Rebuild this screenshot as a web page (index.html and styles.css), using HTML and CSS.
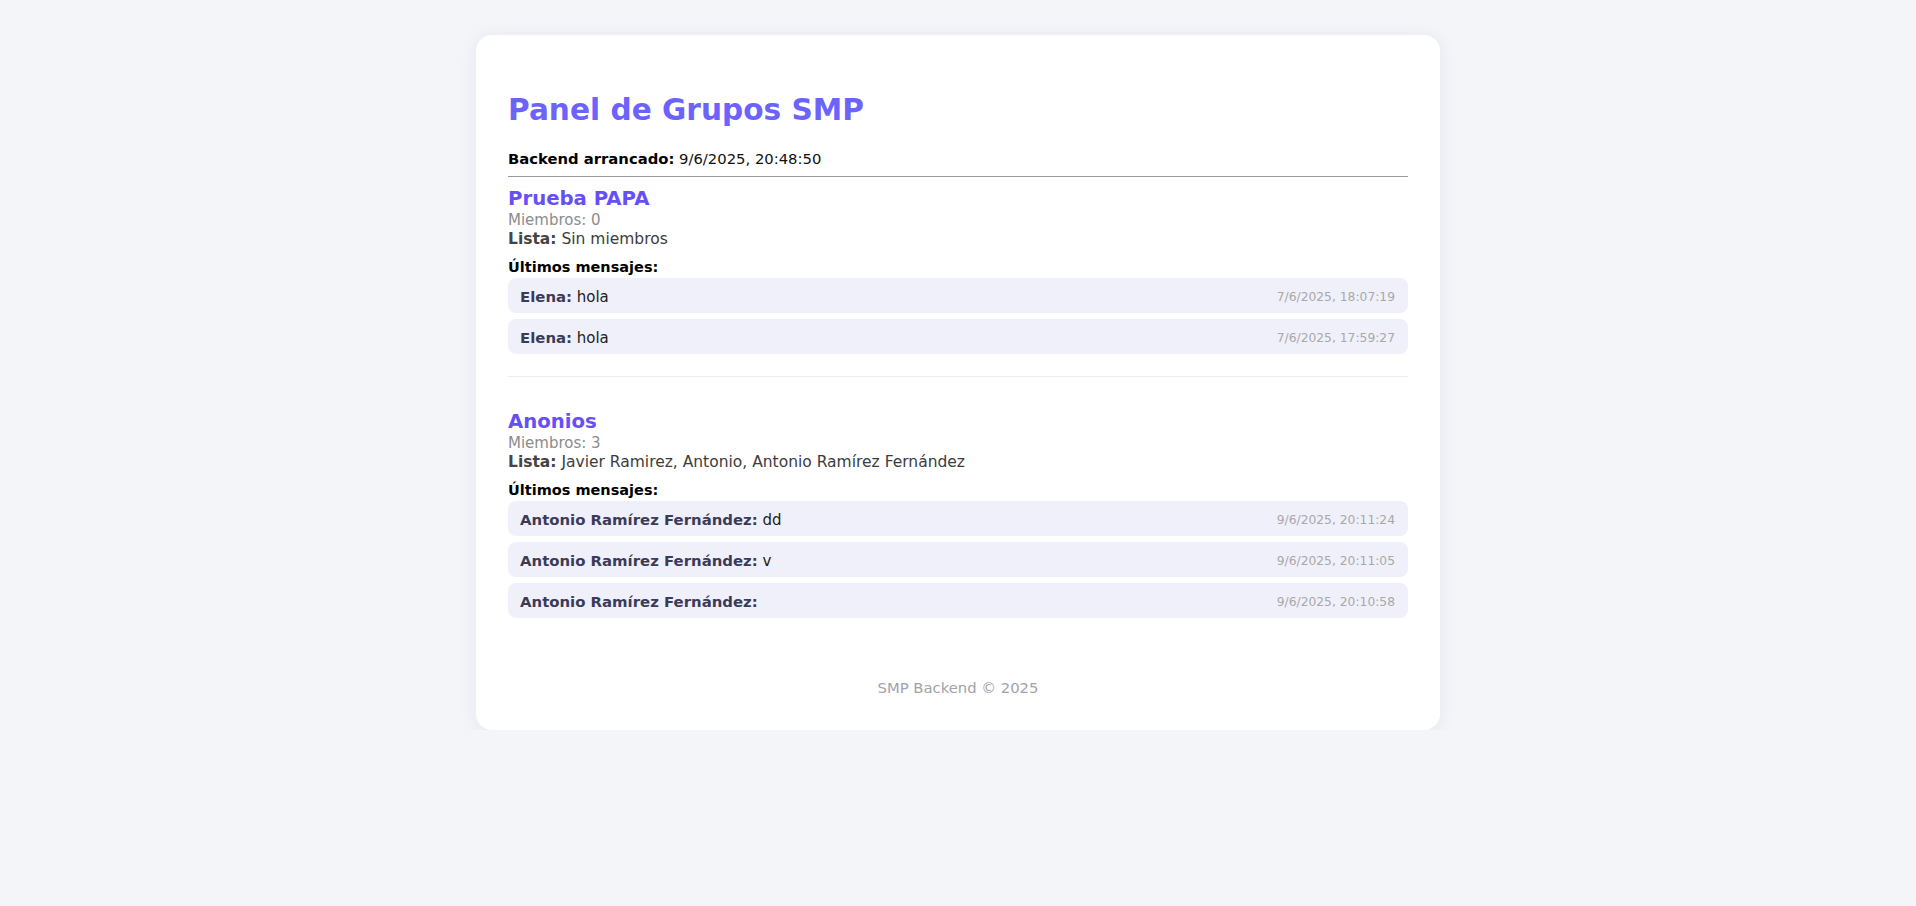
FILE: index.html
```html
<!DOCTYPE html>
<html lang="es">
<head>
<meta charset="utf-8">
<title>Panel de Grupos SMP</title>
<link rel="stylesheet" href="styles.css">
</head>
<body>
<main class="card">
  <h1 class="title">Panel de Grupos SMP</h1>
  <p class="started"><b>Backend arrancado:</b> 9/6/2025, 20:48:50</p>
  <hr class="rule">

  <section class="group">
    <h2 class="group-name">Prueba PAPA</h2>
    <div class="members">Miembros: 0</div>
    <div class="list"><b>Lista:</b> Sin miembros</div>
    <div class="msgs-title">Últimos mensajes:</div>
    <div class="msgs">
      <div class="msg"><span class="msg-text"><b>Elena:</b> hola</span><span class="msg-time">7/6/2025, 18:07:19</span></div>
      <div class="msg"><span class="msg-text"><b>Elena:</b> hola</span><span class="msg-time">7/6/2025, 17:59:27</span></div>
    </div>
  </section>

  <section class="group">
    <h2 class="group-name">Anonios</h2>
    <div class="members">Miembros: 3</div>
    <div class="list"><b>Lista:</b> Javier Ramirez, Antonio, Antonio Ramírez Fernández</div>
    <div class="msgs-title">Últimos mensajes:</div>
    <div class="msgs">
      <div class="msg"><span class="msg-text"><b>Antonio Ramírez Fernández:</b> dd</span><span class="msg-time">9/6/2025, 20:11:24</span></div>
      <div class="msg"><span class="msg-text"><b>Antonio Ramírez Fernández:</b> v</span><span class="msg-time">9/6/2025, 20:11:05</span></div>
      <div class="msg"><span class="msg-text"><b>Antonio Ramírez Fernández:</b> </span><span class="msg-time">9/6/2025, 20:10:58</span></div>
    </div>
  </section>

  <footer class="footer">SMP Backend © 2025</footer>
</main>
</body>
</html>
```

FILE: styles.css
```css
* { box-sizing: border-box; }

body {
  margin: 0;
  padding: 35px 0 0;
  background: #f4f5f9;
  font-family: "DejaVu Sans", "Open Sans", "Liberation Sans", sans-serif;
  color: #222;
}

.card {
  width: 964px;
  margin: 0 auto;
  background: #fff;
  border-radius: 16px;
  box-shadow: 0 2px 18px rgba(40, 40, 90, 0.07);
  padding: 32px 32px 33px;
}

.title {
  margin: 25px 0 21px;
  font-size: 29.6px;
  line-height: 36px;
  font-weight: 700;
  color: #6c63ff;
}

.started {
  margin: 0;
  font-size: 14.8px;
  line-height: 19px;
  color: #111;
}
.started b { font-weight: 700; color: #000; }

.rule {
  margin: 8px 0 0;
  border: 0;
  border-top: 1px solid #9a9a9a;
}

.group {
  padding: 10px 0 22px;
  border-bottom: 1px solid #ececf0;
  margin-bottom: 23px;
}
.group:last-of-type {
  border-bottom: 0;
  margin-bottom: 0;
  padding-bottom: 0;
}

.group-name {
  margin: 0;
  font-size: 19.7px;
  line-height: 24px;
  font-weight: 700;
  color: #6650f5;
}

.members {
  font-size: 15px;
  line-height: 19px;
  color: #8c8c8c;
}

.list {
  font-size: 15.5px;
  line-height: 19px;
  color: #3c3c3c;
}
.list b { color: #444; font-weight: 700; }

.msgs-title {
  margin-top: 9px;
  font-size: 14.5px;
  line-height: 19px;
  font-weight: 700;
  color: #000;
}

.msgs {
  display: flex;
  flex-direction: column;
  gap: 6px;
  margin-top: 1px;
}

.msg {
  display: flex;
  justify-content: space-between;
  align-items: center;
  height: 35px;
  padding: 2px 13px 0 12px;
  background: #f0f0fa;
  border-radius: 8px;
  font-size: 15px;
  color: #222;
}
.msg-text b { color: #3b3b58; font-weight: 700; font-size: 14.9px; }
.msg-time {
  font-size: 12.3px;
  color: #a8a8a8;
}

.footer {
  margin-top: 61px;
  text-align: center;
  font-size: 14.8px;
  line-height: 18px;
  color: #a2a2aa;
}
```
